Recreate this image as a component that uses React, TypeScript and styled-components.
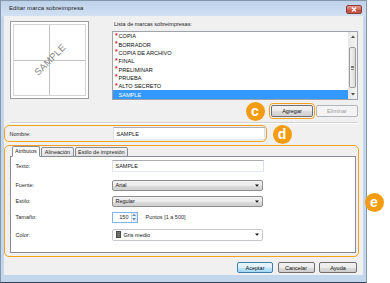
import React from "react";
import styled, { createGlobalStyle } from "styled-components";

const ORANGE = "#f5a11c";

const GlobalStyle = createGlobalStyle`
  html, body { margin: 0; padding: 0; background: #ffffff; }
  body { font-family: "Liberation Sans", Arial, sans-serif; color: #1e1e1e; }
  * { box-sizing: border-box; }
`;

const Stage = styled.div`
  position: relative;
  width: 390px;
  height: 283px;
  overflow: hidden;
`;

const Window = styled.div`
  width: 367px;
  height: 283px;
  display: flex;
  flex-direction: column;
  border: 1px solid #8497ad;
  border-bottom-color: #2f4257;
  padding: 0 3px 7px 3px;
  background: linear-gradient(#bcd1ea 0px, #d2e1f2 15px, #c4d7ec 16px, #c2d6ec 100%);
`;

const TitleBar = styled.div`
  height: 15px;
  display: flex;
  align-items: flex-start;
  justify-content: space-between;
  padding: 0 1px 0 5px;
`;

const Title = styled.span`
  font-size: 6px;
  line-height: 15px;
  color: #1b1b1b;
  letter-spacing: 0.1px;
`;

const CloseBtn = styled.div`
  margin-top: 4px;
  width: 16px;
  height: 9px;
  border: 1px solid #8a3b33;
  border-radius: 2px;
  background: linear-gradient(#e3a096 0%, #d0685c 50%, #c4473a 51%, #c95a4d 100%);
  display: flex;
  align-items: center;
  justify-content: center;
`;

const Client = styled.div`
  height: 259px;
  background: #f0f0f0;
  display: flex;
  flex-direction: column;
`;

const TopSection = styled.div`
  margin-top: 5px;
  padding-left: 6px;
  height: 79px;
  display: flex;
  align-items: flex-start;
`;

const PreviewFrame = styled.div`
  width: 79px;
  height: 78px;
  border: 1px solid #9d9d9d;
  background: #ffffff;
  padding: 2px;
`;

const PreviewCanvas = styled.div`
  width: 100%;
  height: 100%;
  border: 1px solid #d4d4d4;
  display: flex;
  align-items: center;
  justify-content: center;
  background:
    linear-gradient(#c3c3c3, #c3c3c3) center / 1px 100% no-repeat,
    linear-gradient(#c3c3c3, #c3c3c3) center / 100% 1px no-repeat,
    #ffffff;
`;

const SampleMark = styled.span`
  font-size: 9.5px;
  color: #858585;
  letter-spacing: 0.2px;
  transform: rotate(-45deg);
  margin-top: -2px;
`;

const ListColumn = styled.div`
  margin-left: 23px;
  width: 246px;
  display: flex;
  flex-direction: column;
`;

const ListLabel = styled.div`
  height: 10px;
  padding-left: 2px;
  font-size: 5.5px;
  line-height: 7px;
`;

const ListBox = styled.div`
  height: 69px;
  border: 1px solid #9ea3ab;
  background: #ffffff;
  display: flex;
`;

const Items = styled.div`
  flex: 1;
  display: flex;
  flex-direction: column;
`;

const Item = styled.div<{ $selected?: boolean }>`
  height: 8.35px;
  padding-left: 2px;
  display: flex;
  align-items: center;
  font-size: 5.6px;
  background: ${(p) => (p.$selected ? "#3399ff" : "transparent")};
  color: ${(p) => (p.$selected ? "#ffffff" : "#0d0d0d")};
`;

const Star = styled.span`
  color: #e3262b;
  font-weight: bold;
  font-size: 7px;
  line-height: 7px;
  margin-top: -2px;
  width: 3.5px;
`;

const ScrollBar = styled.div`
  width: 9px;
  display: flex;
  flex-direction: column;
  background: linear-gradient(to right, #e6e6e6, #f4f4f4);
`;

const ScrollBtn = styled.div`
  height: 9px;
  display: flex;
  align-items: center;
  justify-content: center;
`;

const Track = styled.div`
  flex: 1;
  padding: 6px 1px 2px 1px;
  display: flex;
`;

const Thumb = styled.div`
  flex: 1;
  border: 1px solid #9b9b9b;
  border-radius: 2px;
  background: linear-gradient(to right, #f3f3f3, #dcdcdc);
  display: flex;
  align-items: center;
  justify-content: center;
`;

const Grip = styled.div`
  width: 3px;
  height: 4px;
  background: repeating-linear-gradient(#7b7b7b 0px, #7b7b7b 1px, transparent 1px, transparent 1.5px);
`;

const ActionRow = styled.div`
  margin-top: 2px;
  height: 17px;
  display: flex;
  align-items: center;
  justify-content: flex-end;
  padding-right: 5px;
`;

const Highlight = styled.div`
  border: 1.5px solid ${ORANGE};
  border-radius: 4px;
  padding: 1px;
`;

const Button = styled.div<{ $w: number; $h?: number; $disabled?: boolean; $default?: boolean; $ml?: number }>`
  width: ${(p) => p.$w}px;
  height: ${(p) => p.$h ?? 12}px;
  margin-left: ${(p) => p.$ml ?? 0}px;
  border: 1px solid ${(p) => (p.$disabled ? "#b2b6b9" : p.$default ? "#3c7fb1" : "#707070")};
  border-radius: 2px;
  background: ${(p) =>
    p.$disabled
      ? "#f4f4f4"
      : p.$default
      ? "linear-gradient(#eaf6fd 0%, #d9f0fc 50%, #bee6fd 51%, #a7d9f5 100%)"
      : "linear-gradient(#f2f2f2 0%, #ebebeb 50%, #dddddd 51%, #cfcfcf 100%)"};
  color: ${(p) => (p.$disabled ? "#9a9a9a" : "#111111")};
  font-size: 5.5px;
  display: flex;
  align-items: center;
  justify-content: center;
`;

const Separator = styled.div`
  margin: 3px 6px 0 6px;
  height: 2px;
  border-top: 1px solid #d3d3d3;
  border-bottom: 1px solid #ffffff;
`;

const NombreBox = styled.div`
  margin-top: 1px;
  width: 263px;
  height: 17px;
  border: 1.5px solid ${ORANGE};
  border-radius: 5px;
  display: flex;
  align-items: center;
  padding: 0 1.5px 0 4.5px;
`;

const Label = styled.span`
  font-size: 5.5px;
  color: #2a2a2a;
  white-space: nowrap;
`;

const NombreLabel = styled(Label)`
  flex: 1;
`;

const TextInput = styled.div<{ $w: number; $h: number }>`
  width: ${(p) => p.$w}px;
  height: ${(p) => p.$h}px;
  border: 1px solid #abadb3;
  border-color: #abadb3 #dbdfe6 #e3e9ef #e2e3ea;
  background: #ffffff;
  padding-left: 3px;
  display: flex;
  align-items: center;
  font-size: 5.5px;
  color: #111;
`;

const TabsBox = styled.div`
  margin-top: 3px;
  width: 355px;
  height: 112px;
  border: 1.5px solid ${ORANGE};
  border-radius: 5px;
  padding: 0.5px 2.5px 3.5px 4.5px;
  display: flex;
  flex-direction: column;
`;

const TabRow = styled.div`
  height: 10px;
  display: flex;
  align-items: flex-end;
  padding-left: 2px;
  gap: 1px;
  margin-bottom: -1px;
  position: relative;
  z-index: 1;
`;

const Tab = styled.div<{ $active?: boolean }>`
  height: ${(p) => (p.$active ? 11 : 10)}px;
  padding: 0 2.5px;
  border: 1px solid #898c95;
  border-bottom: ${(p) => (p.$active ? "1px solid #ffffff" : "1px solid #898c95")};
  border-radius: 2px 2px 0 0;
  background: ${(p) => (p.$active ? "#ffffff" : "linear-gradient(#f3f3f3, #e3e3e3)")};
  font-size: 5.5px;
  display: flex;
  align-items: center;
  color: #1e1e1e;
`;

const Panel = styled.div`
  flex: 1;
  background: #ffffff;
  border: 1px solid #898c95;
  padding: 1px 0 0 5px;
  display: flex;
  flex-direction: column;
`;

const FieldRow = styled.div<{ $h: number; $gap: number }>`
  height: ${(p) => p.$h}px;
  margin-top: ${(p) => p.$gap}px;
  display: grid;
  grid-template-columns: 96px 1fr;
  align-items: center;
`;

const Combo = styled.div<{ $flat?: boolean; $h: number }>`
  width: 151px;
  height: ${(p) => p.$h}px;
  border: 1px solid ${(p) => (p.$flat ? "#c5c8ce" : "#8f8f8f")};
  border-radius: 2px;
  background: ${(p) =>
    p.$flat ? "#ffffff" : "linear-gradient(#f2f2f2 0%, #ebebeb 50%, #dddddd 51%, #cfcfcf 100%)"};
  display: flex;
  align-items: center;
  padding: 0 3px 0 3px;
  font-size: 5.5px;
  color: #111;
`;

const ComboText = styled.span`
  flex: 1;
  display: flex;
  align-items: center;
`;

const Swatch = styled.span`
  width: 5px;
  height: 7px;
  background: #6e6e6e;
  border: 1px solid #4a4a4a;
  margin-right: 3px;
`;

const SpinLine = styled.div`
  display: flex;
  align-items: center;
`;

const Spin = styled.div`
  width: 26px;
  height: 11px;
  display: flex;
  border: 1px solid #7eb4ea;
  background: #ffffff;
`;

const SpinValue = styled.span`
  flex: 1;
  font-size: 5.5px;
  display: flex;
  align-items: center;
  justify-content: flex-end;
  padding-right: 2px;
`;

const SpinBtns = styled.div`
  width: 6px;
  display: flex;
  flex-direction: column;
  border-left: 1px solid #c9d9ea;
  background: linear-gradient(to right, #f4f8fc, #dde8f3);
`;

const SpinHalf = styled.div`
  flex: 1;
  display: flex;
  align-items: center;
  justify-content: center;
`;

const SpinNote = styled(Label)`
  margin-left: 8px;
`;

const BottomRow = styled.div`
  margin-top: 5px;
  display: flex;
  justify-content: flex-end;
  align-items: center;
  gap: 4.5px;
  padding-right: 6px;
`;

const Badge = styled.div<{ $x: number; $y: number }>`
  position: absolute;
  left: ${(p) => p.$x}px;
  top: ${(p) => p.$y}px;
  width: 19px;
  height: 19px;
  border-radius: 50%;
  background: #f39c12;
  color: #ffffff;
  font-family: "Liberation Sans", Arial, sans-serif;
  font-weight: bold;
  font-size: 14px;
  line-height: 18px;
  text-align: center;
`;

const ArrowUp = ({ c = "#4a4a4a" }: { c?: string }) => (
  <svg width="4" height="3" viewBox="0 0 4 3">
    <path d="M0 3 L2 0.5 L4 3 Z" fill={c} />
  </svg>
);

const ArrowDown = ({ c = "#4a4a4a" }: { c?: string }) => (
  <svg width="4" height="3" viewBox="0 0 4 3">
    <path d="M0 0 L4 0 L2 2.5 Z" fill={c} />
  </svg>
);

const ComboArrow = () => (
  <svg width="4" height="3" viewBox="0 0 4 3">
    <path d="M0 0.5 L4 0.5 L2 2.8 Z" fill="#111" />
  </svg>
);

const CloseGlyph = () => (
  <svg width="6" height="5" viewBox="0 0 6 5">
    <path d="M1 0.5 L5 4.5 M5 0.5 L1 4.5" stroke="#ffffff" strokeWidth="1.3" />
  </svg>
);

const items = [
  "COPIA",
  "BORRADOR",
  "COPIA DE ARCHIVO",
  "FINAL",
  "PRELIMINAR",
  "PRUEBA",
  "ALTO SECRETO",
];

export default function App() {
  return (
    <Stage>
      <GlobalStyle />
      <Window>
        <TitleBar>
          <Title>Editar marca sobreimpresa</Title>
          <CloseBtn>
            <CloseGlyph />
          </CloseBtn>
        </TitleBar>
        <Client>
          <TopSection>
            <PreviewFrame>
              <PreviewCanvas>
                <SampleMark>SAMPLE</SampleMark>
              </PreviewCanvas>
            </PreviewFrame>
            <ListColumn>
              <ListLabel>Lista de marcas sobreimpresas:</ListLabel>
              <ListBox>
                <Items>
                  {items.map((t) => (
                    <Item key={t}>
                      <Star>*</Star>
                      {t}
                    </Item>
                  ))}
                  <Item $selected>
                    <Star />
                    SAMPLE
                  </Item>
                </Items>
                <ScrollBar>
                  <ScrollBtn>
                    <ArrowUp />
                  </ScrollBtn>
                  <Track>
                    <Thumb>
                      <Grip />
                    </Thumb>
                  </Track>
                  <ScrollBtn>
                    <ArrowDown />
                  </ScrollBtn>
                </ScrollBar>
              </ListBox>
            </ListColumn>
          </TopSection>

          <ActionRow>
            <Highlight>
              <Button $w={42}>Agregar</Button>
            </Highlight>
            <Button $w={42} $disabled $ml={1}>
              Eliminar
            </Button>
          </ActionRow>

          <Separator />

          <NombreBox>
            <NombreLabel>Nombre:</NombreLabel>
            <TextInput $w={152} $h={13}>SAMPLE</TextInput>
          </NombreBox>

          <TabsBox>
            <TabRow>
              <Tab $active>Atributos</Tab>
              <Tab>Alineación</Tab>
              <Tab>Estilo de impresión</Tab>
            </TabRow>
            <Panel>
              <FieldRow $h={12} $gap={2}>
                <Label>Texto:</Label>
                <TextInput $w={152} $h={12}>SAMPLE</TextInput>
              </FieldRow>
              <FieldRow $h={11} $gap={8}>
                <Label>Fuente:</Label>
                <Combo $h={11}>
                  <ComboText>Arial</ComboText>
                  <ComboArrow />
                </Combo>
              </FieldRow>
              <FieldRow $h={11} $gap={5}>
                <Label>Estilo:</Label>
                <Combo $h={11}>
                  <ComboText>Regular</ComboText>
                  <ComboArrow />
                </Combo>
              </FieldRow>
              <FieldRow $h={11} $gap={5}>
                <Label>Tamaño:</Label>
                <SpinLine>
                  <Spin>
                    <SpinValue>150</SpinValue>
                    <SpinBtns>
                      <SpinHalf>
                        <ArrowUp c="#6d8fb5" />
                      </SpinHalf>
                      <SpinHalf>
                        <ArrowDown c="#6d8fb5" />
                      </SpinHalf>
                    </SpinBtns>
                  </Spin>
                  <SpinNote>Puntos [1 a 500]</SpinNote>
                </SpinLine>
              </FieldRow>
              <FieldRow $h={12} $gap={6}>
                <Label>Color:</Label>
                <Combo $flat $h={12}>
                  <ComboText>
                    <Swatch />
                    Gris medio
                  </ComboText>
                  <ComboArrow />
                </Combo>
              </FieldRow>
            </Panel>
          </TabsBox>

          <BottomRow>
            <Button $w={36} $h={11} $default>
              Aceptar
            </Button>
            <Button $w={37} $h={11}>
              Cancelar
            </Button>
            <Button $w={38} $h={11}>
              Ayuda
            </Button>
          </BottomRow>
        </Client>
      </Window>
      <Badge $x={245.5} $y={101.5}>c</Badge>
      <Badge $x={272.5} $y={124.5}>d</Badge>
      <Badge $x={364.5} $y={192.5}>e</Badge>
    </Stage>
  );
}
